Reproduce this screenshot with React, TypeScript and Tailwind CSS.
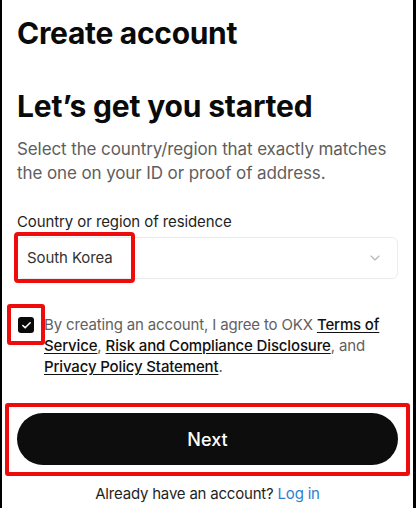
import { Check, ChevronDown } from "lucide-react";

export default function App() {
  return (
    <div
      className="relative w-[416px] h-[508px] overflow-hidden bg-white border-l-2 border-r-[3px] border-black"
      style={{ fontFamily: "Inter, 'Noto Sans', sans-serif" }}
    >
      <div className="flex flex-col px-[15px] pt-[15px]">
        <h1 className="text-[30px] leading-[36px] font-bold text-[#0a0a0a] tracking-[-0.3px]">
          Create account
        </h1>

        <h2 className="mt-[37px] text-[30px] leading-[36px] font-bold text-[#0a0a0a] tracking-[-0.2px]">
          Let’s get you started
        </h2>

        <p className="mt-[13px] text-[17px] leading-[24px] tracking-[-0.1px] text-[#5e5e5e]">
          Select the country/region that exactly matches the one on your ID or proof of address.
        </p>

        <label className="mt-[26px] text-[15px] leading-[22px] tracking-[-0.1px] text-[#1f1f1f]">
          Country or region of residence
        </label>

        <div className="mt-[4px] flex h-[42px] items-center justify-between rounded-[6px] border border-[#ececec] pl-[9px] pr-[14px]">
          <span className="text-[15px] tracking-[-0.1px] text-[#333]">South Korea</span>
          <ChevronDown className="h-[16px] w-[16px] text-[#b5b5b5]" strokeWidth={1.6} />
        </div>

        <div className="mt-[35px] flex items-start gap-[10px]">
          <div className="mt-[3px] ml-[1px] flex h-[16px] w-[16px] shrink-0 items-center justify-center rounded-[3px] bg-[#0a0a0a]">
            <Check className="h-[11px] w-[11px] text-white" strokeWidth={3.5} />
          </div>
          <p className="text-[15px] leading-[21px] tracking-[-0.15px] text-[#616161]">
            By creating an account, I agree to OKX{" "}
            <span className="font-medium text-[#111] underline underline-offset-2">Terms of Service</span>,{" "}
            <span className="font-medium text-[#111] underline underline-offset-2">Risk and Compliance Disclosure</span>, and{" "}
            <span className="font-medium text-[#111] underline underline-offset-2">Privacy Policy Statement</span>.
          </p>
        </div>

        <button className="mt-[36px] flex h-[52px] w-full items-center justify-center rounded-full bg-[#0d0d0d] text-[18px] font-medium text-white">
          Next
        </button>

        <p className="mt-[19px] text-center text-[15px] leading-[20px] tracking-[-0.2px] text-[#1f1f1f]">
          Already have an account? <span className="text-[#2d7fd3]">Log in</span>
        </p>
      </div>

      {/* annotation boxes */}
      <div className="pointer-events-none absolute left-[12px] top-[232px] h-[51px] w-[121px] rounded-[4px] border-[4px] border-[#ee0b0b]" />
      <div className="pointer-events-none absolute left-[5px] top-[304px] h-[41px] w-[38px] rounded-[3px] border-[4px] border-[#ee0b0b]" />
      <div className="pointer-events-none absolute left-[3px] top-[403px] h-[73px] w-[405px] rounded-[3px] border-[4px] border-[#ee0b0b]" />
    </div>
  );
}
